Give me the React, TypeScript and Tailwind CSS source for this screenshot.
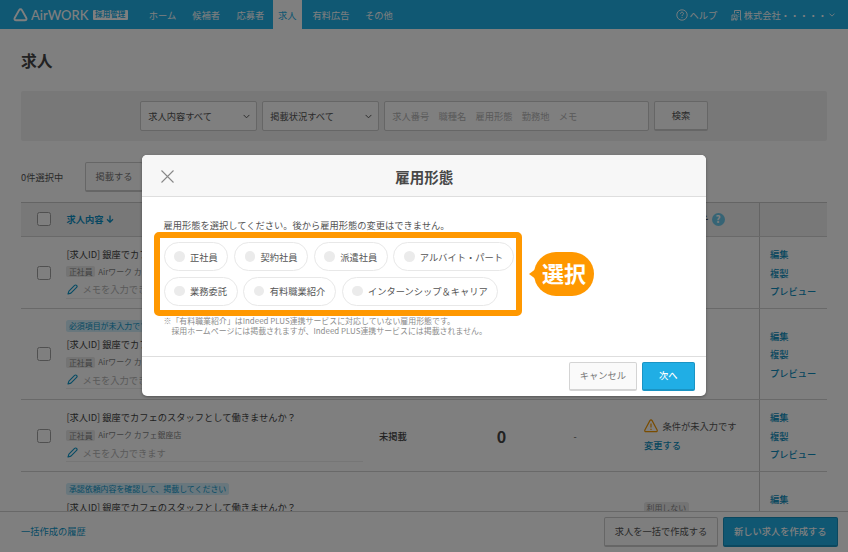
import React from "react";

const navItems = [
  { label: "ホーム", className: "w-[43.7px]" },
  { label: "候補者", className: "w-[43.7px]" },
  { label: "応募者", className: "w-[44.6px]" },
  { label: "求人", className: "w-[29.3px] bg-white text-[#20aee5]" },
  { label: "有料広告", className: "w-[58px]" },
  { label: "その他", className: "w-[38px]" },
];

const jobs = [
  { height: "h-[72.7px]" },
  { height: "h-[90.6px]", alert: "必須項目が未入力です" },
  { height: "h-[72.7px]", status: "未掲載", count: "0", warning: "条件が未入力です" },
  { height: "h-[90.6px]", alert: "承認依頼内容を確認して、掲載してください", unused: "利用しない" },
];

const employmentTypes = [
  ["正社員", "契約社員", "派遣社員", "アルバイト・パート"],
  ["業務委託", "有料職業紹介", "インターンシップ＆キャリア"],
];

const Chevron = ({ className }: { className: string }) => (
  <svg className={className} viewBox="0 0 8 5" fill="none" stroke="currentColor" strokeWidth="1.1">
    <path d="M1 1l3 3 3-3" strokeLinecap="round" strokeLinejoin="round" />
  </svg>
);

const Checkbox = () => (
  <span className="block size-[14px] rounded-[2.5px] border border-[#a0a0a0] bg-white" />
);

const PencilIcon = () => (
  <svg className="size-[11px]" viewBox="0 0 11 11" fill="none" stroke="#0d96c9" strokeWidth="1.1">
    <path d="M1 10l.9-2.9L7.6 1.4a1.35 1.35 0 0 1 2 2L3.9 9.1 1 10z" strokeLinejoin="round" />
  </svg>
);

const Header = () => (
  <header className="flex h-[29px] items-center bg-[#20b0e6] text-white">
    <svg className="ml-[12.5px] h-[14px] w-[15px] shrink-0" viewBox="0 0 15 14" fill="none" stroke="white">
      <path
        d="M6.1 2.1a1.6 1.6 0 0 1 2.8 0l4.3 7.6c.8 1.4.2 2.6-1.4 2.6H3.2c-1.6 0-2.2-1.2-1.4-2.6z"
        strokeWidth="1.9"
      />
    </svg>
    <span className="ml-[3px] w-[62.5px] shrink-0 origin-left scale-x-[0.93] whitespace-nowrap font-['Lato'] text-[14px] font-medium leading-none">
      AirWORK
    </span>
    <span className="flex h-[10px] w-[34.5px] shrink-0 items-center justify-center rounded-[1px] bg-white pb-px text-[7.6px] font-bold leading-none text-[#20aee5]">
      採用管理
    </span>
    <nav className="ml-[13.2px] flex h-full shrink-0">
      {navItems.map((item) => (
        <a key={item.label} className={`flex shrink-0 items-center justify-center ${item.className}`}>
          {item.label}
        </a>
      ))}
    </nav>
    <div className="ml-auto flex items-center">
      <svg className="size-[12px]" viewBox="0 0 12 12" fill="none" stroke="white">
        <circle cx="6" cy="6" r="5.2" strokeWidth=".9" />
        <path d="M4.5 4.8c0-1 .7-1.6 1.5-1.6s1.5.6 1.5 1.4C7.5 5.7 6 5.7 6 7" strokeWidth="1" />
        <circle cx="6" cy="8.6" r=".35" fill="white" strokeWidth=".4" />
      </svg>
      <span className="ml-[2px]">ヘルプ</span>
      <svg className="ml-[13.5px] h-[12px] w-[11px]" viewBox="0 0 11 12" fill="none" stroke="white" strokeWidth=".9">
        <path d="M3.500 4.500V1.500h6v9.500h1M1 11V6h5v5M0 11h2.700V9h1.600v2h1.700M5.500 3.500h2.500M7.500 5.500h.8M7.500 7.500h.8M2.700 7.500h1.600" />
      </svg>
      <span className="ml-[2px]">株式会社・・・・・</span>
      <Chevron className="mr-[13px] ml-[2px] h-[4px] w-[6px]" />
    </div>
  </header>
);

const FilterBar = () => (
  <div className="mx-[21px] mt-[18px] flex h-[50px] justify-center gap-[5px] rounded-[2px] bg-[#f0f0f0] pt-[10px]">
    {["求人内容すべて", "掲載状況すべて"].map((label) => (
      <div
        key={label}
        className="flex h-[30px] w-[117px] items-center justify-between rounded-[2px] border border-[#ccc] bg-white pr-[6px] pl-[7px]"
      >
        {label}
        <Chevron className="h-[5px] w-[7px]" />
      </div>
    ))}
    <div className="flex h-[30px] w-[265px] items-center rounded-[2px] border border-[#ccc] bg-white pl-[7px] text-[#b4b4b4]">
      求人番号　職種名　雇用形態　勤務地　メモ
    </div>
    <button className="h-[30px] w-[53.5px] rounded-[2px] border border-b-2 border-[#ccc] bg-[#fcfcfc] pb-px">
      検索
    </button>
  </div>
);

type JobRowProps = {
  job: (typeof jobs)[number];
};

const JobRow = ({ job }: JobRowProps) => (
  <div className={`flex border-b-[1.5px] border-[#d2d2d2] ${job.height}`}>
    <div className="flex w-[45.4px] items-center pt-px pl-[15.5px]">
      <Checkbox />
    </div>
    <div className="flex w-[296.6px] flex-col pt-[8.3px]">
      {job.alert && (
        <div className="h-[17.6px] pt-[2.4px]">
          <span className="block h-[12px] w-fit rounded-[2.5px] bg-[#d2eefa] px-[2.5px] text-[7.93px] leading-[12px] text-[#0d96c9]">
            {job.alert}
          </span>
        </div>
      )}
      <div className="h-[18px] leading-[18px] text-[#444]">
        [求人ID] 銀座でカフェのスタッフとして働きませんか？
      </div>
      <div className="flex h-[18px] items-center text-[7.93px] text-[#848484]">
        <span className="mr-[3px] h-[11px] rounded-[2px] bg-[#e8e8e8] px-[2.5px] leading-[11px]">正社員</span>
        Airワーク カフェ銀座店
      </div>
      <div className="flex h-[18px] items-center gap-[4px] border-b border-[#ececec] pl-px text-[#b4b4b4]">
        <PencilIcon />
        メモを入力できます
      </div>
    </div>
    <div className="flex w-[87px] items-center pl-[16px] font-medium text-[#444]">{job.status}</div>
    <div className="flex w-[103px] items-center justify-center pt-px text-[16px] font-bold text-[#444]">
      {job.count}
    </div>
    <div className="flex w-[44px] items-center justify-center">{job.count && "-"}</div>
    <div className="flex w-[162px] flex-col justify-center pl-[47px]">
      {job.warning && (
        <>
          <div className="flex h-[18.5px] items-center gap-[4.5px]">
            <svg className="size-[14px]" viewBox="0 0 14 14" fill="none" stroke="#f39800">
              <path d="M5.9 1.6a1.25 1.25 0 0 1 2.2 0l4.9 9.1c.6 1.1.1 2-1 2H2c-1.1 0-1.6-.9-1-2z" strokeWidth="1.2" />
              <path d="M7 4.5v4M7 9.7v1.2" strokeWidth="1.2" />
            </svg>
            {job.warning}
          </div>
          <div className="h-[18.5px] leading-[18.5px] font-medium text-[#0d8dbd]">変更する</div>
        </>
      )}
      {job.unused && (
        <div className="h-[37px] pt-[3px]">
          <span className="block h-[12px] w-fit rounded-[2.5px] bg-[#e8e8e8] px-[2.5px] text-[7.93px] leading-[12px] text-[#848484]">
            {job.unused}
          </span>
        </div>
      )}
    </div>
    <div className="flex flex-1 flex-col justify-center border-l border-[#c8c8c8] pt-[1px] pl-[10px] font-medium leading-[18.5px] text-[#0d8dbd]">
      <a>編集</a>
      <a>複製</a>
      <a>プレビュー</a>
    </div>
  </div>
);

const JobTable = () => (
  <div className="mx-[21px] mt-[10.5px]">
    <div className="flex h-[34.5px] border-t border-b-[1.5px] border-t-[#c8c8c8] border-b-[#d2d2d2] bg-[#f0f0f0]">
      <div className="flex w-[45.4px] items-center pl-[15.5px]">
        <Checkbox />
      </div>
      <div className="flex flex-1 items-center gap-[3px] font-bold text-[#0b8fc4]">
        求人内容
        <svg className="h-[8px] w-[8px]" viewBox="0 0 8 8" fill="none" stroke="currentColor" strokeWidth="1.3">
          <path d="M4 .5v6.500M1 4.200l3 3 3-3" />
        </svg>
      </div>
      <div className="flex items-center gap-[3px] pr-[34.5px] font-bold text-[#444]">
        オートリーチ
        <span className="flex size-[13px] items-center justify-center rounded-full bg-[#6cc9ea] text-[10px] leading-none text-white">
          ?
        </span>
      </div>
      <div className="w-[68px] border-l border-[#c8c8c8]" />
    </div>
    {jobs.map((job, index) => (
      <JobRow key={index} job={job} />
    ))}
  </div>
);

const Footer = () => (
  <footer className="absolute inset-x-0 bottom-0 flex h-[41px] items-center border-t border-[#d0d0d0] bg-white pr-[10.5px] pl-[21px]">
    <a className="flex-1 pb-[2px] text-[#0d96c9]">一括作成の履歴</a>
    <button className="h-[29.5px] w-[114px] rounded-[2px] border border-b-2 border-[#ccc] bg-[#fcfcfc] pb-px">
      求人を一括で作成する
    </button>
    <button className="ml-[5px] h-[29.5px] w-[114.5px] rounded-[2px] border border-b-2 border-[#1791bf] bg-[#20aee5] pb-px font-medium text-white">
      新しい求人を作成する
    </button>
  </footer>
);

const EmploymentModal = () => (
  <section className="absolute top-[155px] left-[142px] flex h-[240.5px] w-[563.5px] flex-col rounded-[5px] bg-white shadow-[0_1px_3px_rgba(0,0,0,0.35)]">
    <div className="flex h-[42px] items-center rounded-t-[5px] border-b border-[#dedede] bg-[#f7f7f7] pl-[19px]">
      <svg className="mt-px size-[13px]" viewBox="0 0 13 13" fill="none" stroke="#888" strokeWidth="1.1">
        <path d="M.5.5l12 12M12.5.5l-12 12" />
      </svg>
      <h2 className="flex-1 pt-[2.5px] pr-[31px] text-center text-[14.5px] font-bold leading-none text-[#484848]">雇用形態</h2>
    </div>
    <div className="flex-1 px-[12px] pt-[20.5px]">
      <p className="h-[14.5px] pl-[9.5px] leading-[14px]">
        雇用形態を選択してください。後から雇用形態の変更はできません。
      </p>
      <div className="flex items-center">
        <div className="flex h-[84px] w-[368px] flex-col gap-[5.5px] rounded-[5px] border-[6px] border-[#ff9800] pt-[4px] pl-[3.7px]">
          {employmentTypes.map((row, index) => (
            <div key={index} className="flex gap-[5.7px]">
              {row.map((label) => (
                <label
                  key={label}
                  className="flex h-[29px] items-center gap-[5.3px] rounded-full border border-[#e8e8e8] pr-[9.6px] pl-[9.6px] whitespace-nowrap"
                >
                  <span className="size-[10.5px] rounded-full bg-[#ebebeb]" />
                  <span>{label}</span>
                </label>
              ))}
            </div>
          ))}
        </div>
        <svg className="ml-[6.5px] h-[14px] w-[8px]" viewBox="0 0 8 14" fill="#ff9800">
          <path d="M0 7l8-6v12z" />
        </svg>
        <span className="-ml-[2.5px] flex h-[44px] w-[60px] items-center justify-center rounded-[22px] bg-[#ff9800] pb-[4px] text-[22px] font-bold text-white">
          選択
        </span>
      </div>
      <p className="pt-[0.3px] pl-[9.5px] text-[7.93px] leading-[9.25px] text-[#8c8c8c]">
        ※「有料職業紹介」はIndeed PLUS連携サービスに対応していない雇用形態です。
        <span className="block pl-[7.93px]">
          採用ホームページには掲載されますが、Indeed PLUS連携サービスには掲載されません。
        </span>
      </p>
    </div>
    <div className="flex h-[39.5px] justify-end gap-[5px] border-t border-[#dedede] pt-[4.5px] pr-[10.7px]">
      <button className="h-[29.5px] w-[68px] rounded-[2px] border border-b-2 border-[#d4d4d4] bg-[#fafafa] pb-px text-[#777]">
        キャンセル
      </button>
      <button className="h-[29.5px] w-[53px] rounded-[2px] border border-b-2 border-[#1a94c4] bg-[#20aee5] pb-px font-medium text-white">
        次へ
      </button>
    </div>
  </section>
);

export default function App() {
  return (
    <main
      lang="ja"
      className="relative h-[552px] w-[848px] overflow-hidden bg-white font-['Noto_Sans_CJK_JP',sans-serif] text-[9.25px] leading-[14px] text-[#545454]"
    >
      <Header />
      <h1 className="mt-[20px] ml-[21px] h-[24px] text-[15.86px] font-bold leading-[24px] text-[#444]">求人</h1>
      <FilterBar />
      <div className="mt-[21px] ml-[21px] flex h-[29.5px] items-center">
        <span className="w-[64px]">0件選択中</span>
        <button className="h-full w-[58px] rounded-[2px] border border-b-2 border-[#ccc] bg-[#fcfcfc] pb-px text-[#777]">
          掲載する
        </button>
      </div>
      <JobTable />
      <Footer />
      <div className="absolute inset-0 bg-black/50" />
      <EmploymentModal />
    </main>
  );
}
